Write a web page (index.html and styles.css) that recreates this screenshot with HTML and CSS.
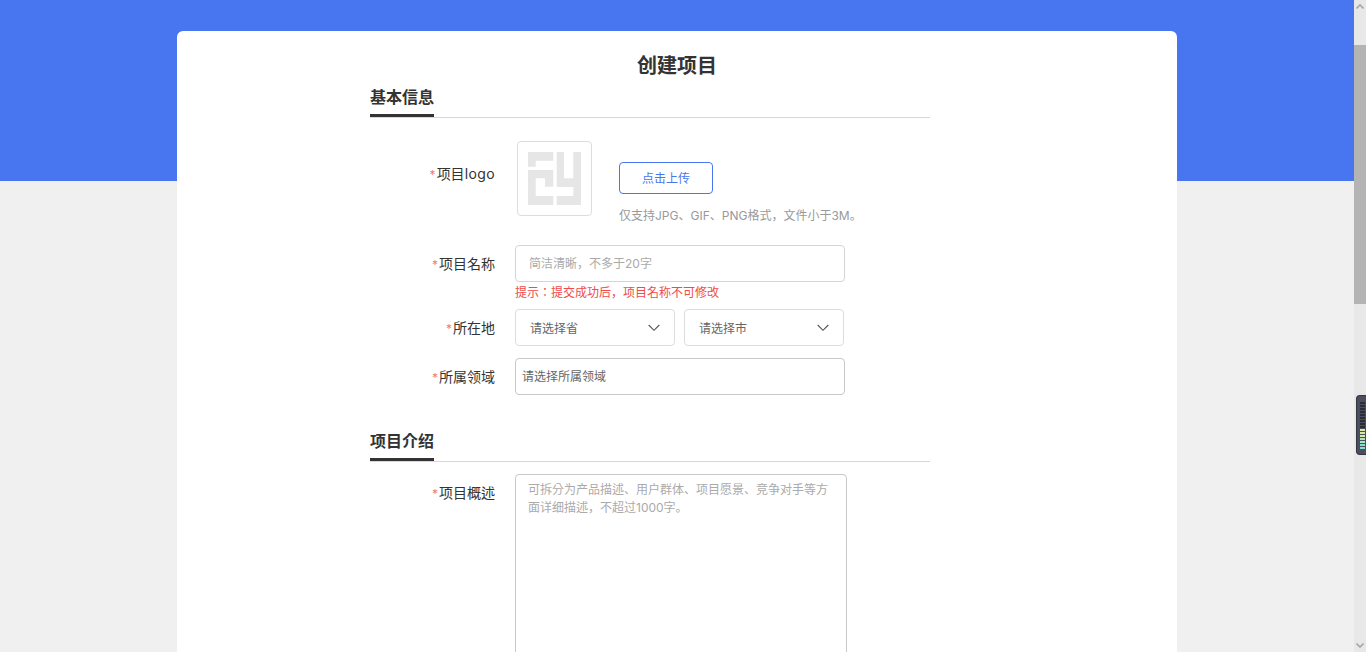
FILE: index.html
```html
<!DOCTYPE html>
<html lang="ko">
<head>
<meta charset="utf-8">
<title>创建项目</title>
<link rel="stylesheet" href="styles.css">
</head>
<body>
<div class="page">
  <main class="main">
    <div class="card">
      <h1 class="title">创建项目</h1>
      <form class="form">
        <div class="section-head"><h2 class="section-title">基本信息</h2></div>

        <div class="row row-logo">
          <label class="label label-logo"><span class="req">*</span>项目<span class="latin">logo</span></label>
          <div class="logo-box">
            <svg class="logo-mark" width="53" height="53" viewBox="0 0 53 53" aria-hidden="true">
              <path fill="#e6e6e6" d="M0 0H25.3V8.7H7.7V14.7H0Z"/>
              <path fill="#e6e6e6" d="M0 18H25.3V34.7H17V26.3H7.7V44H25.3V53H0Z"/>
              <path fill="#e6e6e6" d="M28.7 0H36V26.3H45.3V0H53V53H28.7V44H45.3V35H28.7Z"/>
            </svg>
          </div>
          <div class="upload">
            <button type="button" class="upload-btn">点击上传</button>
            <p class="upload-hint">仅支持JPG、GIF、PNG格式，文件小于3M。</p>
          </div>
        </div>

        <div class="row row-name">
          <label class="label"><span class="req">*</span>项目名称</label>
          <input class="field field-name" type="text" placeholder="简洁清晰，不多于20字">
        </div>
        <p class="warn">提示：提交成功后，项目名称不可修改</p>

        <div class="row row-city">
          <label class="label"><span class="req">*</span>所在地</label>
          <div class="selects">
            <div class="select">
              <span>请选择省</span>
              <svg width="12" height="8" viewBox="0 0 12 8" aria-hidden="true"><path d="M0.700 1L6 6.300 11.300 1" fill="none" stroke="#555" stroke-width="1.100"/></svg>
            </div>
            <div class="select">
              <span>请选择市</span>
              <svg width="12" height="8" viewBox="0 0 12 8" aria-hidden="true"><path d="M0.700 1L6 6.300 11.300 1" fill="none" stroke="#555" stroke-width="1.100"/></svg>
            </div>
          </div>
        </div>

        <div class="row row-field">
          <label class="label"><span class="req">*</span>所属领域</label>
          <div class="field field-domain">请选择所属领域</div>
        </div>

        <div class="section-head section-second"><h2 class="section-title">项目介绍</h2></div>

        <div class="row row-desc">
          <label class="label label-desc"><span class="req">*</span>项目概述</label>
          <textarea class="desc" placeholder="可拆分为产品描述、用户群体、项目愿景、竞争对手等方面详细描述，不超过1000字。"></textarea>
        </div>
      </form>
    </div>
  </main>

  <aside class="scrollbar" aria-hidden="true">
    <svg class="arrow-up" width="8" height="5" viewBox="0 0 8 5"><path d="M0.500 4.500L4 1l3.500 3.500" fill="none" stroke="#a8a4b0" stroke-width="1.600"/></svg>
    <div class="thumb"></div>
    <svg class="arrow-down" width="8" height="5" viewBox="0 0 8 5"><path d="M0.500 0.500L4 4l3.500-3.500" fill="none" stroke="#a8a4b0" stroke-width="1.600"/></svg>
  </aside>

  <div class="widget" aria-hidden="true">
    <div class="meter">
      <i></i><i></i><i></i><i></i><i></i><i></i><i></i><i></i><i></i>
      <i class="on-a"></i><i class="on-a"></i><i class="on-a"></i><i class="on-b"></i><i class="on-b"></i><i class="on-c"></i><i class="on-c"></i>
    </div>
  </div>
</div>
</body>
</html>
```

FILE: styles.css
```css
* { box-sizing: border-box; }

html, body {
  margin: 0;
  height: 100%;
  overflow: hidden;
}

body {
  font-family: Inter, "Noto Sans CJK KR", "Noto Sans CJK SC", sans-serif;
  color: #333;
  background: #f0f0f0;
}

.page {
  position: relative;
  display: flex;
  height: 652px;
  overflow: hidden;
}

.main {
  flex: 1;
  min-width: 0;
  overflow: hidden;
  padding-top: 31px;
  background: #f0f0f0 linear-gradient(#4876f0, #4876f0) no-repeat 0 0 / 100% 181px;
}

.card {
  width: 1000px;
  height: 900px;
  margin: 0 auto;
  padding-top: 21px;
  background: #fff;
  border-radius: 6px 6px 0 0;
}

.title {
  margin: 0;
  height: 28px;
  font-size: 20px;
  line-height: 28px;
  font-weight: 700;
  text-align: center;
  color: #333;
}

.form {
  width: 560px;
  margin: 5px 0 0 193px;
}

.section-head {
  display: flex;
  border-bottom: 1px solid #d8d8d8;
}

.section-second { margin-top: 34px; }

.section-title {
  height: 32px;
  margin: 0;
  padding-bottom: 5px;
  font-size: 16px;
  line-height: 24px;
  font-weight: 700;
  color: #333;
  border-bottom: 3px solid #333;
}

.row { display: flex; }

.label {
  flex: none;
  width: 125px;
  height: 37px;
  margin-right: 20px;
  font-size: 14px;
  line-height: 37px;
  text-align: right;
  color: #333;
}

.req {
  margin-right: 1px;
  font-size: 12px;
  line-height: 1;
  color: #f07a7a;
}

.latin { letter-spacing: 0.4px; }

.row-logo { margin-top: 23px; }

.label-logo {
  height: 44px;
  padding-top: 22px;
  line-height: 22px;
}

.logo-box {
  flex: none;
  display: flex;
  align-items: center;
  justify-content: center;
  width: 75px;
  height: 75px;
  margin-left: 2px;
  border: 1px solid #ddd;
  border-radius: 4px;
}

.upload { margin-left: 27px; }

.upload-btn {
  display: block;
  width: 94px;
  height: 32px;
  margin-top: 21px;
  padding: 0 0 2px;
  border: 1px solid #4876f0;
  border-radius: 4px;
  background: #fff;
  font: inherit;
  font-size: 12px;
  color: #4876f0;
}

.upload-hint {
  height: 18px;
  margin: 13px 0 0;
  font-size: 12px;
  line-height: 18px;
  color: #999;
  white-space: nowrap;
}

.row-name { margin-top: 20px; }

.field {
  width: 330px;
  height: 37px;
  border: 1px solid #d4d4d4;
  border-radius: 4px;
  background: #fff;
  font: inherit;
  font-size: 12px;
  outline: none;
}

.field-name {
  padding: 0 13px;
}

.field-name::placeholder,
.desc::placeholder {
  color: #aaa;
  opacity: 1;
}

.warn {
  height: 18px;
  margin: 2px 0 0 145px;
  font-size: 12px;
  line-height: 18px;
  color: #f04a4a;
}

.row-city { margin-top: 7px; }

.selects {
  display: flex;
  gap: 9px;
}

.select {
  display: flex;
  align-items: center;
  justify-content: space-between;
  width: 160px;
  height: 37px;
  padding: 0 14px;
  border: 1px solid #ddd;
  border-radius: 4px;
  font-size: 12px;
  color: #666;
}

.row-field { margin-top: 12px; }

.field-domain {
  padding-left: 6px;
  border-color: #c8c8c8;
  line-height: 35px;
  color: #666;
}

.row-desc { margin-top: 12px; }

.label-desc {
  height: 30px;
  padding-top: 8px;
  line-height: 22px;
}

.desc {
  display: block;
  flex: none;
  width: 332px;
  height: 300px;
  padding: 6px 12px;
  border: 1px solid #c8c8c8;
  border-radius: 4px;
  font: inherit;
  font-size: 12px;
  line-height: 18px;
  resize: none;
  outline: none;
}

.scrollbar {
  position: relative;
  flex: none;
  display: flex;
  flex-direction: column;
  align-items: center;
  width: 12px;
  padding-top: 45px;
  background: #e8e8e8;
}

.thumb {
  width: 100%;
  height: 259px;
  background: #b4b4b4;
}

.arrow-up {
  position: absolute;
  top: 4px;
  left: 2px;
}

.arrow-down {
  position: absolute;
  bottom: 4px;
  left: 2px;
}

.widget {
  position: absolute;
  top: 395px;
  right: 0;
  width: 10px;
  height: 60px;
  padding: 6px 0 0 3px;
  background: #4a4e5e;
  border: 1px solid #33363f;
  border-right: 0;
  border-radius: 4px 0 0 4px;
}

.meter {
  display: flex;
  flex-direction: column;
  gap: 1px;
}

.meter i {
  display: block;
  width: 5px;
  height: 2px;
  background: #2a2d35;
}

.meter .on-a { background: #d8e8a0; }
.meter .on-b { background: #a8e8b8; }
.meter .on-c { background: #80e0d0; }
```
